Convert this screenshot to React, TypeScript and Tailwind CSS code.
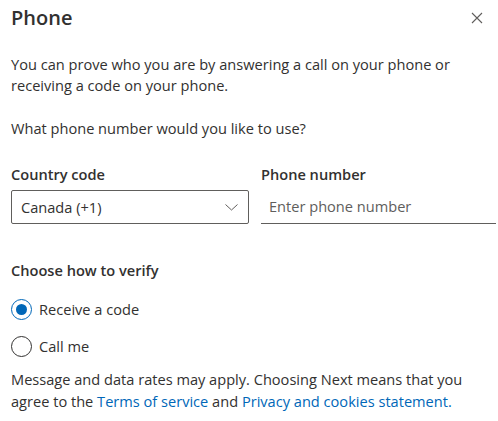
import { useState } from 'react'

export default function App() {
  const [method, setMethod] = useState<'code' | 'call'>('code')

  return (
    <div
      className="w-[498px] h-[421px] bg-white text-[#323130] overflow-hidden"
      style={{ fontFamily: '"Open Sans", "Noto Sans", sans-serif' }}
    >
      <div className="flex items-center justify-between pl-[11px] pr-[14px] pt-[3px] h-[32px]">
        <h1 className="text-[20px] font-semibold leading-[28px]">Phone</h1>
        <button className="w-[14px] h-[14px] flex items-center justify-center text-[#605e5c]">
          <svg width="12" height="12" viewBox="0 0 12 12" fill="none" stroke="currentColor" strokeWidth="1.1">
            <path d="M1 1 L11 11 M11 1 L1 11" />
          </svg>
        </button>
      </div>

      <div className="pl-[11px] pr-[2px] text-[14.6px] leading-[21px]">
        <p className="mt-[22px] pr-[4px]">
          You can prove who you are by answering a call on your phone or receiving a code on your phone.
        </p>
        <p className="mt-[22px]">What phone number would you like to use?</p>

        <div className="flex gap-[12px] mt-[25px]">
          <div className="w-[238px]">
            <label className="block font-semibold leading-[20px]">Country code</label>
            <div className="mt-[6px] h-[34px] border border-[#605e5c] rounded-[2px] flex items-center justify-between pl-[9px] pr-[10px]">
              <span>Canada (+1)</span>
              <svg width="13" height="7" viewBox="0 0 13 7" fill="none" stroke="#605e5c" strokeWidth="1">
                <path d="M0.5 0.5 L6.5 6 L12.5 0.5" />
              </svg>
            </div>
          </div>
          <div className="flex-1">
            <label className="block font-semibold leading-[20px]">Phone number</label>
            <div className="mt-[6px] h-[34px] border-b border-[#605e5c] flex items-center pl-[8px]">
              <span className="text-[#605e5c]">Enter phone number</span>
            </div>
          </div>
        </div>

        <p className="mt-[36px] font-semibold leading-[20px]">Choose how to verify</p>

        <div className="mt-[19px] flex flex-col gap-[16px]">
          <label className="flex items-center gap-[7px] cursor-pointer" onClick={() => setMethod('code')}>
            <span
              className={
                method === 'code'
                  ? 'w-[21px] h-[21px] rounded-full border border-[#0067b8] flex items-center justify-center'
                  : 'w-[21px] h-[21px] rounded-full border border-[#323130] flex items-center justify-center'
              }
            >
              {method === 'code' && <span className="w-[11px] h-[11px] rounded-full bg-[#0067b8]" />}
            </span>
            <span>Receive a code</span>
          </label>
          <label className="flex items-center gap-[7px] cursor-pointer" onClick={() => setMethod('call')}>
            <span
              className={
                method === 'call'
                  ? 'w-[21px] h-[21px] rounded-full border border-[#0067b8] flex items-center justify-center'
                  : 'w-[21px] h-[21px] rounded-full border border-[#323130] flex items-center justify-center'
              }
            >
              {method === 'call' && <span className="w-[11px] h-[11px] rounded-full bg-[#0067b8]" />}
            </span>
            <span>Call me</span>
          </label>
        </div>

        <p className="mt-[11px] leading-[22px] pr-[4px]">
          Message and data rates may apply. Choosing Next means that you agree to the{' '}
          <a className="text-[#0067b8]">Terms of service</a> and{' '}
          <a className="text-[#0067b8]">Privacy and cookies statement.</a>
        </p>
      </div>
    </div>
  )
}
